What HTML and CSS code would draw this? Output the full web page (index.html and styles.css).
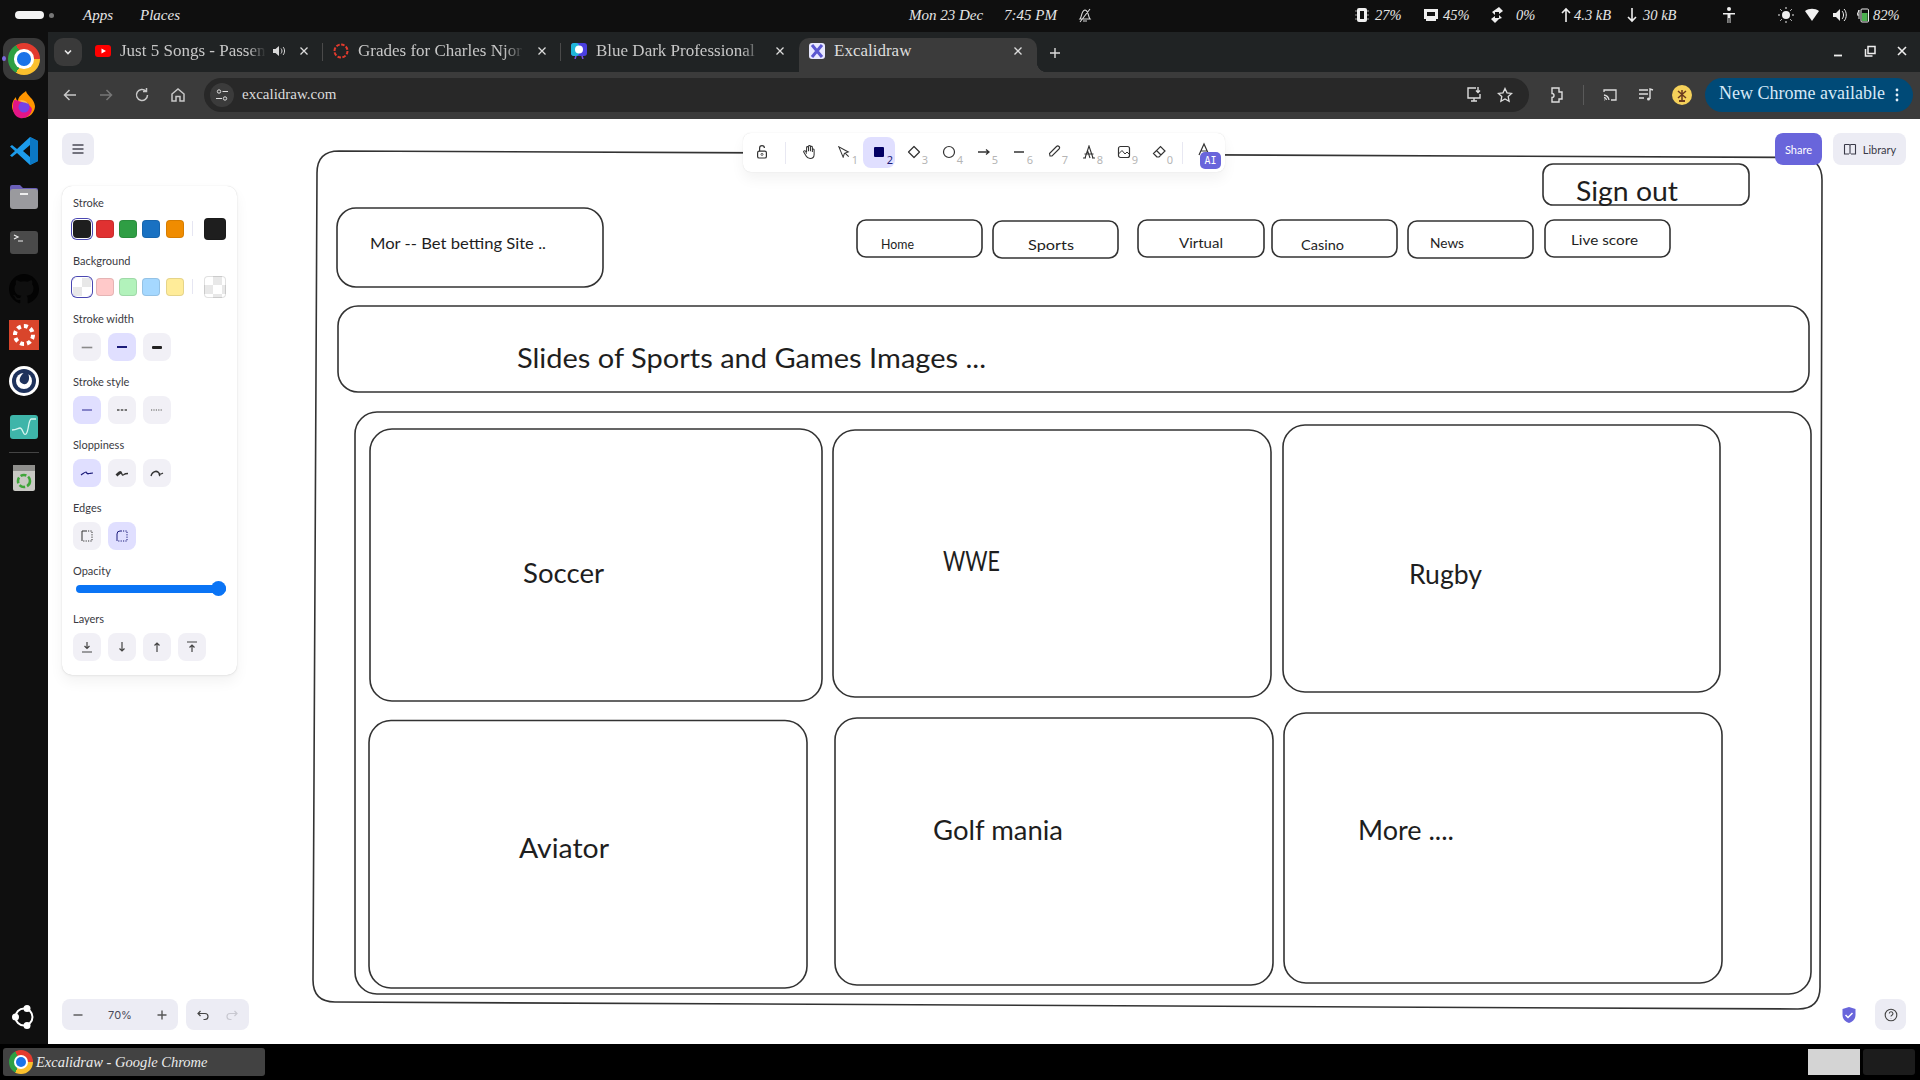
FILE: index.html
```html
<!DOCTYPE html>
<html lang="en">
<head>
<meta charset="utf-8">
<title>Excalidraw - Google Chrome</title>
<link rel="stylesheet" href="styles.css">
</head>
<body>
<div class="screen">
  <header class="statusbar">
    <span class="activities"><i class="pill"></i><i class="dot"></i></span>
    <span class="menu-apps">Apps</span>
    <span class="menu-places">Places</span>
    <span class="clock">Mon 23 Dec</span>
    <span class="time">7:45 PM</span>
    <svg class="bell" width="16" height="18" viewBox="0 0 16 18"><path d="M3 13c2-2 1-8 5-9 4 1 3 7 5 9zM6 15h4M3 16L13 3" fill="none" stroke="#d8d8d8" stroke-width="1.1"/></svg>
    <div class="tray">
      <span class="t t-cpu"><svg width="14" height="16" viewBox="0 0 14 16"><path d="M0 4h14M0 8h14M0 12h14" stroke="#bbb" stroke-width=".8"/><rect x="2" y="1" width="10" height="14" rx="2" fill="#eee"/><rect x="5" y="4" width="4" height="8" fill="#111"/></svg>27%</span>
      <span class="t t-mem"><svg width="16" height="14" viewBox="0 0 16 14"><path d="M1 1h14v10h-2v2H3v-2H1z" fill="#eee"/><path d="M4 4h8v4H4z" fill="#111"/></svg>45%</span>
      <span class="t t-swap"><svg width="14" height="18" viewBox="0 0 14 18"><path d="M9 1l4 4-4 3V6H5v3L2 6zM5 17l-4-4 4-3v2h4V9l3 3-3 1v0z" fill="#eee"/></svg>0%</span>
      <span class="t t-up"><svg width="12" height="16" viewBox="0 0 12 16"><path d="M6 15V2M2 6l4-4 4 4" fill="none" stroke="#eee" stroke-width="1.6"/></svg>4.3 kB</span>
      <span class="t t-down"><svg width="12" height="16" viewBox="0 0 12 16"><path d="M6 1v13M2 10l4 4 4-4" fill="none" stroke="#eee" stroke-width="1.6"/></svg>30 kB</span>
      <span class="t t-person"><svg width="14" height="18" viewBox="0 0 14 18"><circle cx="7" cy="3" r="2" fill="#eee"/><path d="M1 7h12v1.4H8.500V17H7.600v-5h-1.200v5H5.500V8.400H1z" fill="#eee"/></svg></span>
      <span class="t t-sun"><svg width="18" height="18" viewBox="0 0 18 18"><circle cx="9" cy="9" r="4" fill="#eee"/><path d="M9 1v2M9 15v2M1 9h2M15 9h2M3.300 3.300l1.400 1.400M13.300 13.300l1.400 1.400M3.300 14.700l1.400-1.400M13.300 4.700l1.400-1.400" stroke="#eee"/></svg></span>
      <span class="t t-wifi"><svg width="16" height="14" viewBox="0 0 16 14"><path d="M1 3c4-3 10-3 14 0L8 13z" fill="#f2f2f2"/></svg></span>
      <span class="t t-vol"><svg width="16" height="16" viewBox="0 0 16 16"><path d="M1 6h3l4-4v12l-4-4H1z" fill="#eee"/><path d="M10 4c2 2 2 6 0 8M12 2c3 3 3 9 0 12" fill="none" stroke="#eee"/></svg></span>
      <span class="t t-batt"><svg width="12" height="16" viewBox="0 0 12 16"><path d="M2 8L0 8 2 3zM2 8l0 4" stroke="#eee" fill="none"/><rect x="4" y="2" width="7.500" height="13" rx="1" fill="none" stroke="#eee"/><rect x="5" y="6" width="5.500" height="8" fill="#4caf50"/></svg>82%</span>
    </div>
  </header>

  <div class="workspace">
    <nav class="dock">
      <div class="dock-item dock-active"><span class="chrome chrome-lg"></span><i class="run-dot"></i></div>
      <div class="dock-item"><svg width="28" height="30" viewBox="0 0 28 30"><path d="M16 1c1 5 8 7 9 15a11.500 11.500 0 1 1-23 0c0-4 2-7 4-9 0 3 1 3 2 4 0-4 4-7 8-10z" fill="#ff9500"/><path d="M4 10c5 0 17 4 18 9-1 7-7 10-12 9-6-1-9-9-6-18z" fill="#e31587"/><circle cx="14" cy="17" r="5.500" fill="#7542e5"/><path d="M8 11c4-2 9 0 10 3-3-2-7-2-10-3z" fill="#ffbd4f"/></svg></div>
      <div class="dock-item"><svg width="30" height="30" viewBox="0 0 30 30"><path d="M21 1l8 4v20l-8 4L8 17l-5 4-2-1.500L6 15 1 10.500 3 9l5 4zM21 9l-7 6 7 6z" fill="#1c9bea"/><path d="M21 1l8 4v20l-8 4z" fill="#0b78c5"/></svg></div>
      <div class="dock-item"><svg width="30" height="28" viewBox="0 0 30 28"><path d="M1 4a2 2 0 0 1 2-2h8l3 3h13a2 2 0 0 1 2 2v4H1z" fill="#6a5fb8"/><rect x="1" y="6" width="28" height="20" rx="3" fill="#9a9a9e"/><rect x="11" y="10" width="8" height="2" fill="#eee"/></svg></div>
      <div class="dock-item"><svg width="28" height="24" viewBox="0 0 28 24"><rect width="28" height="23" rx="3" fill="#4a4a4a"/><path d="M4 4l4 2-4 2M8 10h5" fill="none" stroke="#eee" stroke-width="1.200"/></svg></div>
      <div class="dock-item"><svg width="30" height="30" viewBox="0 0 24 24"><path fill="#030303" d="M12 0C5.400 0 0 5.400 0 12c0 5.300 3.400 9.800 8.200 11.400.6.100.8-.3.800-.6v-2c-3.300.7-4-1.600-4-1.600-.5-1.400-1.300-1.800-1.300-1.800-1.100-.7.100-.7.100-.7 1.200.1 1.800 1.200 1.800 1.200 1.100 1.800 2.800 1.300 3.500 1 .1-.8.400-1.300.8-1.600-2.700-.3-5.500-1.300-5.500-5.900 0-1.300.5-2.400 1.200-3.200-.1-.3-.5-1.500.1-3.200 0 0 1-.3 3.300 1.200a11.500 11.500 0 0 1 6 0c2.300-1.500 3.300-1.200 3.300-1.200.7 1.700.2 2.900.1 3.200.8.800 1.200 1.900 1.200 3.200 0 4.600-2.800 5.600-5.500 5.900.4.400.8 1.100.8 2.200v3.300c0 .3.200.7.800.6C20.600 21.800 24 17.300 24 12 24 5.400 18.600 0 12 0z"/></svg></div>
      <div class="dock-item"><svg width="30" height="30" viewBox="0 0 30 30"><rect width="30" height="30" fill="#d9452b"/><circle cx="15" cy="15" r="9" fill="none" stroke="#fff" stroke-width="4" stroke-dasharray="4 3"/><circle cx="15" cy="15" r="3" fill="none" stroke="#d9452b"/></svg></div>
      <div class="dock-item"><svg width="30" height="30" viewBox="0 0 30 30"><circle cx="15" cy="15" r="15" fill="#fff"/><circle cx="15" cy="15" r="12" fill="#1e325c"/><circle cx="15" cy="15" r="8" fill="#fff"/><path d="M18 4c2 5 3 9 1 12a4.500 4.500 0 0 1-8-4c1-3 4-6 7-8z" fill="#1e325c"/></svg></div>
      <div class="dock-item"><svg width="28" height="24" viewBox="0 0 28 24"><rect width="28" height="24" rx="3" fill="#3eb5a9"/><path d="M2 15c5 0 6-2 8-2 3 0 3 8 6 6 3-3 2-13 5-15h5" fill="none" stroke="#d8f5f0" stroke-width="1.300"/></svg></div>
      <hr class="dock-sep">
      <div class="dock-item dock-trash"><svg width="24" height="28" viewBox="0 0 24 28"><rect x="1" y="1" width="22" height="26" rx="2" fill="#c9c9c4"/><rect x="1" y="1" width="22" height="6" fill="#8f8f8c"/><circle cx="12" cy="17" r="6" fill="none" stroke="#3fa53a" stroke-width="2.600" stroke-dasharray="6 2"/></svg></div>
      <div class="dock-item dock-ubuntu"><svg width="24" height="24" viewBox="0 0 24 24"><circle cx="12" cy="12" r="8.500" fill="none" stroke="#fff" stroke-width="2"/><circle cx="15" cy="3.500" r="3.500" fill="#fff"/><circle cx="3.500" cy="12" r="3.500" fill="#fff"/><circle cx="15" cy="20.500" r="3.500" fill="#fff"/></svg></div>
    </nav>

    <main class="browser">
      <div class="tabstrip">
        <button class="tab-list"><svg width="10" height="10" viewBox="0 0 10 10"><path d="M2 3.500l3 3 3-3" fill="none" stroke="#e8e8e8" stroke-width="1.600"/></svg></button>
        <div class="tab tab-sep">
          <svg class="fav" width="16" height="16" viewBox="0 0 16 16"><rect y="2" width="16" height="12" rx="3" fill="#f00"/><path d="M6.500 5.500v5L11 8z" fill="#fff"/></svg>
          <span class="tab-title">Just 5 Songs - Passen</span>
          <svg class="speaker" width="14" height="14" viewBox="0 0 14 14"><path d="M1 5h2.500L7 2v10L3.500 9H1z" fill="#d8d8d8"/><path d="M9 4.500c1.300 1.500 1.300 3.500 0 5M11 3c2 2 2 6 0 8" fill="none" stroke="#d8d8d8"/></svg>
          <svg class="close" width="10" height="10" viewBox="0 0 10 10"><path d="M1.500 1.500l7 7M8.500 1.500l-7 7" stroke="#dcdcdc" stroke-width="1.300"/></svg>
        </div>
        <div class="tab tab-sep">
          <svg class="fav" width="16" height="16" viewBox="0 0 16 16"><circle cx="8" cy="8" r="6.500" fill="none" stroke="#e23b2e" stroke-width="2" stroke-dasharray="3.500 1.500"/></svg>
          <span class="tab-title">Grades for Charles Njor</span>
          <svg class="close" width="10" height="10" viewBox="0 0 10 10"><path d="M1.500 1.500l7 7M8.500 1.500l-7 7" stroke="#dcdcdc" stroke-width="1.300"/></svg>
        </div>
        <div class="tab">
          <svg class="fav" width="16" height="16" viewBox="0 0 16 16"><rect width="16" height="13" rx="3" fill="#4a3fe0"/><rect width="8" height="13" rx="3" fill="#1fb6d9"/><circle cx="8" cy="6.500" r="4" fill="#fff"/><path d="M5 13l-1 3M11 13l1 3" stroke="#7a4fe0" stroke-width="1.500"/></svg>
          <span class="tab-title">Blue Dark Professional</span>
          <svg class="close" width="10" height="10" viewBox="0 0 10 10"><path d="M1.500 1.500l7 7M8.500 1.500l-7 7" stroke="#dcdcdc" stroke-width="1.300"/></svg>
        </div>
        <div class="tab tab-active">
          <svg class="fav" width="16" height="16" viewBox="0 0 16 16"><rect width="16" height="16" rx="3" fill="#e8e8ff"/><path d="M3 2l10 12M13 2L3 14" stroke="#5b57d1" stroke-width="3"/></svg>
          <span class="tab-title tt-plain">Excalidraw</span>
          <svg class="close" width="10" height="10" viewBox="0 0 10 10"><path d="M1.500 1.500l7 7M8.500 1.500l-7 7" stroke="#dcdcdc" stroke-width="1.300"/></svg>
        </div>
        <svg class="newtab" width="12" height="12" viewBox="0 0 12 12"><path d="M6 1v10M1 6h10" stroke="#dcdcdc" stroke-width="1.400"/></svg>
        <div class="winctl">
          <svg width="12" height="12" viewBox="0 0 12 12"><path d="M2 10.500h8" stroke="#eee" stroke-width="1.800"/></svg>
          <svg width="12" height="12" viewBox="0 0 12 12"><path d="M4 1.500h7v7H4zM1.500 4v7h7" fill="none" stroke="#eee" stroke-width="1.500"/></svg>
          <svg width="12" height="12" viewBox="0 0 12 12"><path d="M2 2l8 8M10 2l-8 8" stroke="#eee" stroke-width="1.600"/></svg>
        </div>
      </div>

      <div class="toolbar">
        <div class="nav-icons">
          <svg width="16" height="16" viewBox="0 0 16 16"><path d="M14 8H2.500M7.500 3l-5 5 5 5" fill="none" stroke="#c8c8c8" stroke-width="1.500"/></svg>
          <svg width="16" height="16" viewBox="0 0 16 16"><path d="M2 8h11.500M8.500 3l5 5-5 5" fill="none" stroke="#777" stroke-width="1.500"/></svg>
          <svg width="16" height="16" viewBox="0 0 16 16"><path d="M13.500 8a5.500 5.500 0 1 1-1.600-3.900M12.500 1v3.500H9" fill="none" stroke="#c8c8c8" stroke-width="1.500"/></svg>
          <svg width="16" height="16" viewBox="0 0 16 16"><path d="M2 14V7l6-5 6 5v7H10V9.500H6V14z" fill="none" stroke="#c8c8c8" stroke-width="1.500"/></svg>
        </div>
        <div class="omnibox">
          <span class="site-chip"><svg width="14" height="14" viewBox="0 0 14 14"><circle cx="4" cy="3.500" r="1.700" fill="none" stroke="#ddd"/><path d="M7.500 3.500H13M1 10.500h6" stroke="#ddd"/><circle cx="10" cy="10.500" r="1.700" fill="none" stroke="#ddd"/></svg></span>
          <span class="url">excalidraw.com</span>
          <svg class="omni-save" width="16" height="18" viewBox="0 0 16 18"><path d="M10 2H2v10h12V8M5 15h6M8 12v3M12 1v5M10 4.500l2 2 2-2" fill="none" stroke="#ddd" stroke-width="1.400"/></svg>
          <svg class="omni-star" width="16" height="16" viewBox="0 0 16 16"><path d="M8 1.500l2 4.300 4.700.6-3.500 3.200.9 4.700L8 12l-4.100 2.300.9-4.700L1.300 6.400 6 5.800z" fill="none" stroke="#ddd" stroke-width="1.300"/></svg>
        </div>
        <div class="tool-icons">
          <svg width="16" height="18" viewBox="0 0 16 18"><path d="M3 2h7v4h3v7h-3v3H3v-4.500a2 2 0 0 0 0-4z" fill="none" stroke="#ddd" stroke-width="1.400"/></svg>
          <i class="tool-sep"></i>
          <svg class="ic-cast" width="16" height="16" viewBox="0 0 16 16"><path d="M2 5V3h12v10H9M2 8a6 6 0 0 1 5 5M2 10.500A3 3 0 0 1 4.500 13M2 13h.5" fill="none" stroke="#ddd" stroke-width="1.300"/></svg>
          <svg class="ic-media" width="16" height="16" viewBox="0 0 16 16"><path d="M1 3h9M1 7h9M1 11h5M12 12V2l3 1" fill="none" stroke="#ddd" stroke-width="1.400"/><circle cx="10.500" cy="12" r="1.500" fill="#ddd"/></svg>
          <svg class="ic-avatar" width="20" height="20" viewBox="0 0 20 20"><circle cx="10" cy="10" r="10" fill="#f5d15a"/><path d="M10 5v11M6 6l8 7M14 6l-8 7" stroke="#6b3a1e" stroke-width="1.500"/><path d="M7 16h6" stroke="#6b3a1e" stroke-width="2"/></svg>
        </div>
        <div class="update-pill"><span>New Chrome available</span><svg width="4" height="14" viewBox="0 0 4 14"><circle cx="2" cy="2" r="1.400" fill="#e3f0fa"/><circle cx="2" cy="7" r="1.400" fill="#e3f0fa"/><circle cx="2" cy="12" r="1.400" fill="#e3f0fa"/></svg></div>
      </div>

      <div class="canvas">
        <svg class="drawing" viewBox="48 119 1872 925" width="1872" height="925">
          <g class="shapes">
            <path d="M339 151L1799 157.500Q1822 158 1822 180L1820 987Q1820 1009 1798 1009L335 1002Q313 1002 313 980L317 173Q317 151 339 151Z"/>
            <rect x="337" y="208" width="266" height="79" rx="19"/>
            <rect x="857" y="220" width="125" height="37" rx="9"/>
            <rect x="993" y="221" width="125" height="37" rx="9"/>
            <rect x="1138" y="220" width="126" height="37" rx="9"/>
            <rect x="1272" y="220" width="125" height="37" rx="9"/>
            <rect x="1408" y="221" width="125" height="37" rx="9"/>
            <rect x="1545" y="220" width="125" height="37" rx="9"/>
            <rect x="1543" y="164" width="206" height="41" rx="10"/>
            <rect x="338" y="306" width="1471" height="86" rx="20"/>
            <rect x="355" y="412" width="1456" height="582" rx="22"/>
            <rect x="370" y="429" width="452" height="272" rx="22"/>
            <rect x="833" y="430" width="438" height="267" rx="22"/>
            <rect x="1283" y="425" width="437" height="267" rx="22"/>
            <rect x="369" y="720.500" width="438" height="267.500" rx="22"/>
            <rect x="835" y="718" width="438" height="267" rx="22"/>
            <rect x="1284" y="713" width="438" height="270" rx="22"/>
          </g>
          <g class="hand">
            <text class="s14" x="370" y="249" textLength="176" lengthAdjust="spacingAndGlyphs">Mor -- Bet betting Site ..</text>
            <text class="s13" x="881" y="249" textLength="33" lengthAdjust="spacingAndGlyphs">Home</text>
            <text class="s13" x="1028" y="250" textLength="46" lengthAdjust="spacingAndGlyphs">Sports</text>
            <text class="s13" x="1179" y="248" textLength="44" lengthAdjust="spacingAndGlyphs">Virtual</text>
            <text class="s13" x="1301" y="250" textLength="43" lengthAdjust="spacingAndGlyphs">Casino</text>
            <text class="s13" x="1430" y="248" textLength="34" lengthAdjust="spacingAndGlyphs">News</text>
            <text class="s13" x="1571" y="245" textLength="67" lengthAdjust="spacingAndGlyphs">Live score</text>
            <text class="s25" x="1576" y="201" textLength="102" lengthAdjust="spacingAndGlyphs">Sign out</text>
            <text class="s25" x="517" y="368" textLength="469" lengthAdjust="spacingAndGlyphs">Slides of Sports and Games Images ...</text>
            <text class="s25" x="523" y="583" textLength="81" lengthAdjust="spacingAndGlyphs">Soccer</text>
            <text class="s25" x="943" y="571" textLength="57" lengthAdjust="spacingAndGlyphs">WWE</text>
            <text class="s25" x="1409" y="584" textLength="73" lengthAdjust="spacingAndGlyphs">Rugby</text>
            <text class="s25" x="519" y="858" textLength="90" lengthAdjust="spacingAndGlyphs">Aviator</text>
            <text class="s25" x="933" y="840" textLength="130" lengthAdjust="spacingAndGlyphs">Golf mania</text>
            <text class="s25" x="1358" y="840" textLength="96" lengthAdjust="spacingAndGlyphs">More ....</text>
          </g>
        </svg>

        <button class="ui-btn menu-btn"><svg width="16" height="16" viewBox="0 0 16 16"><path d="M2.500 4h11M2.500 8h11M2.500 12h11" stroke="#4a4a55" stroke-width="1.300"/></svg></button>

        <aside class="panel">
          <section class="sec">
            <h3>Stroke</h3>
            <div class="swatches">
              <span class="slot"><i class="sw sw-sel c-black"></i></span><span class="slot"><i class="sw c-red"></i></span><span class="slot"><i class="sw c-green"></i></span><span class="slot"><i class="sw c-blue"></i></span><span class="slot"><i class="sw c-orange"></i></span>
              <i class="sw-sep"></i><i class="sw-big c-black"></i>
            </div>
          </section>
          <section class="sec">
            <h3>Background</h3>
            <div class="swatches">
              <span class="slot"><i class="sw sw-sel c-none"></i></span><span class="slot"><i class="sw c-pink"></i></span><span class="slot"><i class="sw c-mint"></i></span><span class="slot"><i class="sw c-sky"></i></span><span class="slot"><i class="sw c-sand"></i></span>
              <i class="sw-sep"></i><i class="sw-big c-none"></i>
            </div>
          </section>
          <section class="sec">
            <h3>Stroke width</h3>
            <div class="btns">
              <span class="pb"><i class="bar w1"></i></span>
              <span class="pb on"><i class="bar w2"></i></span>
              <span class="pb"><i class="bar w3"></i></span>
            </div>
          </section>
          <section class="sec">
            <h3>Stroke style</h3>
            <div class="btns">
              <span class="pb on"><i class="bar w4"></i></span>
              <span class="pb"><svg width="12" height="4" viewBox="0 0 12 4"><path d="M1 2h10" stroke="#777" stroke-width="2" stroke-dasharray="2.500 1.300"/></svg></span>
              <span class="pb"><svg width="12" height="4" viewBox="0 0 12 4"><path d="M0 2h12" stroke="#888" stroke-width="1.500" stroke-dasharray="1.200 1.200"/></svg></span>
            </div>
          </section>
          <section class="sec">
            <h3>Sloppiness</h3>
            <div class="btns">
              <span class="pb on"><svg width="14" height="8" viewBox="0 0 14 8"><path d="M1 6c3-2 4-3 5-3 1 2 2 2 3 1.500 1 0 2-.5 4-.5" fill="none" stroke="#1b1b7a" stroke-width="1.200"/></svg></span>
              <span class="pb"><svg width="14" height="9" viewBox="0 0 14 9"><path d="M1 6c3-3 4-4 5-3 1 2 1 4 3 2.500 1-1 2-1 4-1M2 7c2-2 3-3 4-3" fill="none" stroke="#333" stroke-width="1.300"/></svg></span>
              <span class="pb"><svg width="14" height="9" viewBox="0 0 14 9"><path d="M1 7c1-5 6-6 8-3 1 2 2 1 4 0M2 5c2-3 5-3 7-1 0 1 0 2 1 3" fill="none" stroke="#333" stroke-width="1.300"/></svg></span>
            </div>
          </section>
          <section class="sec">
            <h3>Edges</h3>
            <div class="btns">
              <span class="pb"><svg width="12" height="12" viewBox="0 0 12 12"><path d="M1 11V1h5" fill="none" stroke="#333"/><path d="M7 1h4v10H1" fill="none" stroke="#333" stroke-dasharray="1.200 1.200"/></svg></span>
              <span class="pb on"><svg width="12" height="12" viewBox="0 0 12 12"><path d="M1 11V4a3 3 0 0 1 3-3h2" fill="none" stroke="#1b1b7a"/><path d="M7 1h4v10H1" fill="none" stroke="#1b1b7a" stroke-dasharray="1.200 1.200"/></svg></span>
            </div>
          </section>
          <section class="sec">
            <h3>Opacity</h3>
            <div class="slider"><div class="track"><i class="thumb"></i></div></div>
          </section>
          <section class="sec">
            <h3>Layers</h3>
            <div class="btns">
              <span class="pb"><svg width="12" height="12" viewBox="0 0 12 12"><path d="M6 1v6M3.500 5L6 7.500 8.500 5M1 11h10" fill="none" stroke="#444" stroke-width="1.200"/></svg></span>
              <span class="pb"><svg width="12" height="12" viewBox="0 0 12 12"><path d="M6 1v9M3.500 7.500L6 10l2.500-2.500" fill="none" stroke="#444" stroke-width="1.200"/></svg></span>
              <span class="pb"><svg width="12" height="12" viewBox="0 0 12 12"><path d="M6 11V2M3.500 4.500L6 2l2.500 2.500" fill="none" stroke="#444" stroke-width="1.200"/></svg></span>
              <span class="pb"><svg width="12" height="12" viewBox="0 0 12 12"><path d="M6 11V4M3.500 6.500L6 4l2.500 2.500M1 1h10" fill="none" stroke="#444" stroke-width="1.200"/></svg></span>
            </div>
          </section>
        </aside>

        <div class="shapes-bar">
          <span class="tb"><svg width="16" height="16" viewBox="0 0 20 20"><rect x="4.500" y="9" width="11" height="8.500" rx="2" fill="none" stroke="#333" stroke-width="1.500"/><circle cx="10" cy="13" r="1.300" fill="none" stroke="#333"/><path d="M7 9V5a3 3 0 0 1 6 0" fill="none" stroke="#333" stroke-width="1.500"/></svg></span>
          <i class="tb-sep"></i>
          <span class="tb"><svg width="16" height="16" viewBox="0 0 20 20"><path d="M7 10V4.500a1.200 1.200 0 0 1 2.400 0V9m0-6a1.200 1.200 0 0 1 2.400 0v6m0-5a1.200 1.200 0 0 1 2.400 0v6m0-3a1.200 1.200 0 0 1 2.200 0v6c0 3-2 5-5 5s-4-1-5-3l-3-5c-.6-1 1-2.500 2.500-1L7 12" fill="none" stroke="#333" stroke-width="1.300"/></svg></span>
          <span class="tb"><svg width="12" height="12" viewBox="0 0 14 14"><path d="M1 1l5 12 1.500-4.500L12 7zM8 8l4.500 4.500" fill="none" stroke="#333" stroke-width="1.200"/></svg><b class="key">1</b></span>
          <span class="tb tb-on"><svg width="14" height="14" viewBox="0 0 14 14"><rect x="2" y="2" width="10" height="10" rx="1" fill="#030064"/></svg><b class="key">2</b></span>
          <span class="tb"><svg width="16" height="16" viewBox="0 0 16 16"><path d="M8 2.500L13.500 8 8 13.500 2.500 8z" fill="none" stroke="#333" stroke-width="1.200" stroke-linejoin="round"/></svg><b class="key">3</b></span>
          <span class="tb"><svg width="14" height="14" viewBox="0 0 14 14"><circle cx="7" cy="7" r="5.500" fill="none" stroke="#333" stroke-width="1.200"/></svg><b class="key">4</b></span>
          <span class="tb"><svg width="14" height="14" viewBox="0 0 14 14"><path d="M1 7h11M9 4.500L12 7 9 9.500" fill="none" stroke="#333" stroke-width="1.300"/></svg><b class="key">5</b></span>
          <span class="tb"><svg width="14" height="14" viewBox="0 0 14 14"><path d="M2 7h10" stroke="#333" stroke-width="1.500"/></svg><b class="key">6</b></span>
          <span class="tb"><svg width="14" height="14" viewBox="0 0 14 14"><path d="M3 11l-.5-2.500L9.500 1.500a1.500 1.500 0 0 1 2.500 2.500L5 11z" fill="none" stroke="#333" stroke-width="1.100"/></svg><b class="key">7</b></span>
          <span class="tb"><svg width="14" height="14" viewBox="0 0 14 14"><path d="M1 13h3M10 13h3M3 13L7 1l4 12M2.500 9h9M5.500 5.500l2.500 7.500" fill="none" stroke="#333" stroke-width="1.100"/></svg><b class="key">8</b></span>
          <span class="tb"><svg width="14" height="14" viewBox="0 0 14 14"><rect x="1.500" y="1.500" width="11" height="11" rx="2" fill="none" stroke="#333" stroke-width="1.200"/><path d="M1.500 9L5 5.500 8 9l2-2 2.500 2.500" fill="none" stroke="#333"/></svg><b class="key">9</b></span>
          <span class="tb"><svg width="15" height="14" viewBox="0 0 15 14"><path d="M5 12L1.500 8.500 8.500 1.500 13 6 7 12zM4.500 5.500L9 10" fill="none" stroke="#333" stroke-width="1.200"/></svg><b class="key">0</b></span>
          <i class="tb-sep tb-sep2"></i>
          <span class="tb tb-ai"><svg width="14" height="14" viewBox="0 0 14 14"><path d="M2 13L7 2l5 11M4 9h6" fill="none" stroke="#333" stroke-width="1.200"/></svg><b class="ai">AI</b></span>
        </div>

        <div class="top-right">
          <button class="share">Share</button>
          <button class="library"><svg width="14" height="14" viewBox="0 0 14 14"><path d="M1.500 2.500h4.500a1 1 0 0 1 1 1V12M12.500 2.500H8a1 1 0 0 0-1 1M1.500 2.500V12H6M12.500 2.500V12H8" fill="none" stroke="#3a3a48" stroke-width="1.100"/></svg>Library</button>
        </div>

        <div class="bottom-left">
          <div class="ctl ctl-zoom"><svg width="12" height="12" viewBox="0 0 12 12"><path d="M1.500 6h9" stroke="#555" stroke-width="1.400"/></svg><span>70%</span><svg width="12" height="12" viewBox="0 0 12 12"><path d="M1.500 6h9M6 1.500v9" stroke="#555" stroke-width="1.400"/></svg></div>
          <div class="ctl ctl-hist"><svg width="14" height="14" viewBox="0 0 14 14"><path d="M4.500 8L2 5.500 4.500 3M2 5.500h7a3 3 0 0 1 0 6H7.500" fill="none" stroke="#444" stroke-width="1.200"/></svg><svg width="14" height="14" viewBox="0 0 14 14"><path d="M9.500 8L12 5.500 9.500 3M12 5.500H5a3 3 0 0 0 0 6h1.500" fill="none" stroke="#c8c8d0" stroke-width="1.200"/></svg></div>
        </div>

        <div class="bottom-right">
          <svg width="14" height="16" viewBox="0 0 14 16"><path d="M7 0l6.500 2v6c0 4-3 7-6.500 8C3.500 15 .5 12 .5 8V2z" fill="#6965db"/><path d="M3.500 8l2.500 2.500 4.500-4.500" fill="none" stroke="#fff" stroke-width="1.500"/></svg>
          <button class="ui-btn help"><svg width="14" height="14" viewBox="0 0 14 14"><circle cx="7" cy="7" r="5.800" fill="none" stroke="#444" stroke-width="1.100"/><path d="M5.300 5.500a1.800 1.800 0 1 1 2.600 1.700c-.6.300-.9.700-.9 1.300M7 10.300v.2" fill="none" stroke="#444" stroke-width="1.100"/></svg></button>
        </div>
      </div>
    </main>
  </div>

  <footer class="taskbar">
    <div class="task"><span class="chrome chrome-sm"></span><span>Excalidraw - Google Chrome</span></div>
    <div class="pager"><i class="desk desk-on"></i><i class="desk"></i></div>
  </footer>
</div>
</body>
</html>
```

FILE: styles.css
```css
* { box-sizing: border-box; }
html, body { margin: 0; padding: 0; background: #000; }
i { display: block; font-style: normal; }
button { border: 0; padding: 0; font: inherit; }
svg { display: block; flex-shrink: 0; }

.screen { width: 1920px; height: 1080px; display: flex; flex-direction: column; overflow: hidden; font-family: "Liberation Serif", serif; }

/* top status bar */
.statusbar { height: 32px; flex: none; background: #0f0f0f; color: #e6e6e6; display: flex; align-items: center; font-style: italic; font-size: 15px; white-space: nowrap; padding-bottom: 2px; }
.activities { display: flex; align-items: center; gap: 5px; margin-left: 15px; width: 68px; }
.pill { width: 29px; height: 8px; border-radius: 4px; background: #f4f4f4; }
.dot { width: 5px; height: 5px; border-radius: 50%; background: #777; }
.menu-apps { width: 57px; }
.clock { margin-left: 729px; width: 95px; }
.time { width: 73px; }
.bell { margin-left: 0; }
.tray { margin-left: auto; display: flex; align-items: center; }
.t { display: flex; align-items: center; gap: 5px; font-size: 14.500px; }
.t-cpu { width: 68px; gap: 6px; }
.t-mem { width: 67px; gap: 4px; }
.t-swap { width: 70px; gap: 12px; }
.t-up { width: 66px; gap: 2px; }
.t-down { width: 96px; gap: 5px; }
.t-person { width: 55px; }
.t-sun { width: 27px; }
.t-wifi { width: 28px; }
.t-vol { width: 25px; }
.t-batt { width: 63px; font-size: 14.500px; gap: 4px; }

.workspace { flex: 1; display: flex; min-height: 0; }

/* dock */
.dock { width: 48px; flex: none; background: #0f0f0f; display: flex; flex-direction: column; align-items: center; padding-top: 6px; }
.dock-item { height: 46px; width: 42px; display: flex; align-items: center; justify-content: center; flex: none; }
.dock-active { height: 42px; background: #3a3a3a; border-radius: 11px; margin-bottom: 2px; position: relative; }
.run-dot { position: absolute; left: -1px; top: 18px; width: 4px; height: 5px; border-radius: 50%; background: #7c6be0; }
.dock-sep { width: 30px; height: 1px; border: 0; background: #444; margin: 2px 0 0; flex: none; }
.dock-trash { margin-top: 2px; }
.dock-ubuntu { margin-top: auto; margin-bottom: 4px; }

.chrome { display: block; position: relative; border-radius: 50%; background: conic-gradient(from 330deg, #e33b2e 0 120deg, #fbc02d 120deg 240deg, #2ea043 240deg 360deg); }
.chrome::after { content: ""; position: absolute; inset: 29%; border-radius: 50%; background: #1a73e8; box-shadow: 0 0 0 3px #fff; }
.chrome-lg { width: 32px; height: 32px; }
.chrome-sm { width: 24px; height: 24px; }
.chrome-sm::after { box-shadow: 0 0 0 2px #fff; }

/* browser */
.browser { flex: 1; min-width: 0; display: flex; flex-direction: column; }
.tabstrip { height: 40px; flex: none; background: #202324; display: flex; align-items: flex-end; color: #c7c7c7; font-size: 17px; }
.tab-list { width: 28px; height: 28px; margin: 0 3px 6px 6px; border-radius: 9px; background: #3a3a3a; display: flex; align-items: center; justify-content: center; }
.tab { width: 238px; height: 34px; flex: none; display: flex; align-items: center; padding: 0 14px 8px 10px; position: relative; }
.tab-sep::after { content: ""; position: absolute; right: 0; top: 5px; height: 18px; width: 1px; background: #4a4a4a; }
.fav { margin-right: 9px; }
.tab-title { flex: 1; min-width: 0; white-space: nowrap; overflow: visible; -webkit-mask-image: linear-gradient(90deg, #000 88%, transparent); mask-image: linear-gradient(90deg, #000 88%, transparent); }
.tt-plain { -webkit-mask-image: none; mask-image: none; }
.speaker { margin: 0 0 0 6px; }
.close { margin-left: 13px; }
.tab-active { background: #3b3b3b; border-radius: 10px 10px 0 0; color: #dedede; }
.tab-active::after { content: ""; position: absolute; right: -10px; bottom: 0; width: 10px; height: 10px; background: radial-gradient(circle at 100% 0, transparent 10px, #3b3b3b 10.500px); }
.newtab { margin: 0 0 13px 12px; }
.winctl { margin-left: auto; display: flex; gap: 20px; align-items: center; padding: 0 12px 2px 0; height: 40px; }

.toolbar { height: 47px; flex: none; background: #3b3b3b; display: flex; align-items: center; padding-bottom: 1px; }
.nav-icons { display: flex; gap: 20px; margin-left: 14px; width: 142px; }
.omnibox { width: 1325px; height: 34px; background: #282828; border-radius: 17px; display: flex; align-items: center; padding: 0 16px 0 6px; color: #dcdcdc; font-size: 15px; }
.site-chip { width: 24px; height: 24px; border-radius: 50%; background: #3b3b3b; display: flex; align-items: center; justify-content: center; margin-right: 8px; }
.url { flex: 1; padding-bottom: 2px; }
.omni-star { margin-left: 15px; }
.tool-icons { display: flex; align-items: center; margin-left: 20px; width: 156px; }
.tool-sep { width: 1px; height: 20px; background: #5a5a5a; margin: 0 18px 0 18px; }
.ic-media { margin-left: 20px; }
.ic-avatar { margin-left: 18px; }
.update-pill { width: 208px; height: 34px; border-radius: 17px; background: #004a77; color: #d6e9f7; display: flex; align-items: center; justify-content: space-between; padding: 0 14px; font-size: 18px; white-space: nowrap; }
.update-pill span { padding-bottom: 3px; }

/* canvas */
.canvas { flex: 1; min-height: 0; background: #fff; position: relative; font-family: "Lato", sans-serif; color: #3a3a48; }
.drawing { display: block; }
.shapes path, .shapes rect { fill: none; stroke: #333; stroke-width: 1.600; }
.hand text { font-family: "Lato", sans-serif; fill: #1e1e1e; }
.s13 { font-size: 14px; }
.s14 { font-size: 15px; }
.s25 { font-size: 27px; }

.ui-btn { width: 32px; height: 32px; border-radius: 8px; background: #ececf4; display: flex; align-items: center; justify-content: center; }
.menu-btn { position: absolute; left: 14px; top: 14px; }

.panel { position: absolute; left: 14px; top: 67px; width: 175px; background: #fff; border-radius: 10px; box-shadow: 0 0 1px rgba(0,0,0,.18), 0 7px 14px rgba(0,0,0,.05), 0 1px 3px rgba(0,0,0,.05); padding: 9px 11px 14px; display: flex; flex-direction: column; gap: 13px; }
.sec h3 { margin: 0; height: 16px; line-height: 16px; font-size: 11px; font-weight: 400; color: #3a3a42; }
.swatches { display: flex; align-items: center; height: 23px; margin: 6px 0 0 -2.500px; }
.btns { display: flex; gap: 7px; margin-top: 6px; }
.slot { width: 23.300px; display: flex; justify-content: center; }
.sw { width: 18px; height: 18px; border-radius: 4px; box-shadow: 0 0 0 1px rgba(0,0,0,.1) inset; }
.sw-sel { box-shadow: 0 0 0 1px #fff, 0 0 0 2px #4a47b1; }
.sw-sep { width: 1px; height: 15px; background: #e6e6f2; margin: 0 11px 0 6px; }
.sw-big { width: 22px; height: 22px; border-radius: 4px; box-shadow: 0 0 0 1px rgba(0,0,0,.12) inset; }
.c-black { background: #1e1e1e; }
.c-red { background: #e03131; }
.c-green { background: #2f9e44; }
.c-blue { background: #1971c2; }
.c-orange { background: #f08c00; }
.c-pink { background: #ffc9c9; }
.c-mint { background: #b2f2bb; }
.c-sky { background: #a5d8ff; }
.c-sand { background: #ffec99; }
.c-none { background: repeating-conic-gradient(#e8e8e8 0 25%, #fff 0 50%) 0 0 / 18px 18px; }

.pb { width: 28px; height: 28px; border-radius: 8px; background: #f1f0f6; display: flex; align-items: center; justify-content: center; }
.pb.on { background: #e0dfff; }
.bar { width: 10px; }
.w1 { height: 1px; background: #8a8a8a; box-shadow: 0 0 0 .3px #8a8a8a; }
.w2 { height: 2px; background: #1b1b7a; }
.w3 { height: 3px; width: 10px; background: #222; border-radius: 1px; }
.w4 { height: 2px; background: #8583c9; }

.slider { height: 19px; display: flex; align-items: center; padding-left: 3px; }
.track { width: 153px; height: 8px; border-radius: 4px; background: #0a74f5; display: flex; align-items: center; justify-content: flex-end; }
.thumb { width: 15px; height: 15px; border-radius: 50%; background: #0a74f5; flex: none; }

.shapes-bar { position: absolute; left: 695px; top: 14px; height: 39px; padding: 4px 5px 4px 3px; background: #fff; border-radius: 8px; box-shadow: 0 0 1px rgba(0,0,0,.16), 0 7px 14px rgba(0,0,0,.05); display: flex; align-items: center; gap: 3px; font-family: "Noto Sans", sans-serif; }
.tb { width: 32px; height: 31px; border-radius: 8px; display: flex; align-items: center; justify-content: center; position: relative; flex: none; }
.tb svg { margin: 0 0 2px; }
.tb-on { background: #e0dfff; }
.tb-sep { width: 1px; height: 22px; background: #e8e8f2; margin: 0 4px; flex: none; }
.tb-sep2 { margin: 0 2px 0 4px; }
.key { position: absolute; right: 2px; bottom: 2px; font-size: 11px; font-weight: 400; color: #b5b5b5; line-height: 13px; }
.tb-on .key { color: #1b1b7a; }
.tb-ai svg { margin: 0 0 8px; }
.ai { position: absolute; left: 12px; top: 15px; width: 21px; height: 17px; background: #6965db; color: #fff; border-radius: 5px; font-size: 10px; font-weight: 400; display: flex; align-items: center; justify-content: center; font-family: "DejaVu Sans Mono", monospace; }

.top-right { position: absolute; right: 14px; top: 14px; display: flex; gap: 11px; }
.share { width: 47px; height: 32px; border-radius: 8px; background: #6965db; color: #fff; font-family: "Lato", sans-serif; font-size: 11px; }
.library { width: 73px; height: 32px; border-radius: 8px; background: #ececf4; color: #3a3a48; font-family: "Lato", sans-serif; font-size: 11px; display: flex; align-items: center; justify-content: center; gap: 6px; }

.bottom-left { position: absolute; left: 14px; bottom: 14px; display: flex; gap: 8px; }
.ctl { height: 31px; border-radius: 8px; background: #ececf4; display: flex; align-items: center; }
.ctl-zoom { width: 116px; justify-content: space-between; padding: 0 10px 0 10px; font-family: "Inter", sans-serif; font-size: 11px; color: #4a4a58; }
.ctl-hist { width: 63px; justify-content: space-between; padding: 0 10px; }

.bottom-right { position: absolute; right: 14px; bottom: 14px; display: flex; align-items: center; gap: 19px; }
.help { height: 31px; width: 31px; }

/* taskbar */
.taskbar { height: 36px; flex: none; background: #000; display: flex; align-items: center; padding: 0 5px 0 3px; }
.task { width: 262px; height: 28px; border-radius: 3px; background: #424242; color: #ececec; display: flex; align-items: center; gap: 3px; padding-left: 6px; font-style: italic; font-size: 14.500px; white-space: nowrap; }
.pager { margin-left: auto; display: flex; gap: 3px; }
.desk { width: 52px; height: 26px; background: #1c1c1c; border-radius: 3px; }
.desk-on { background: #d4d4d4; border-radius: 0; }
```
